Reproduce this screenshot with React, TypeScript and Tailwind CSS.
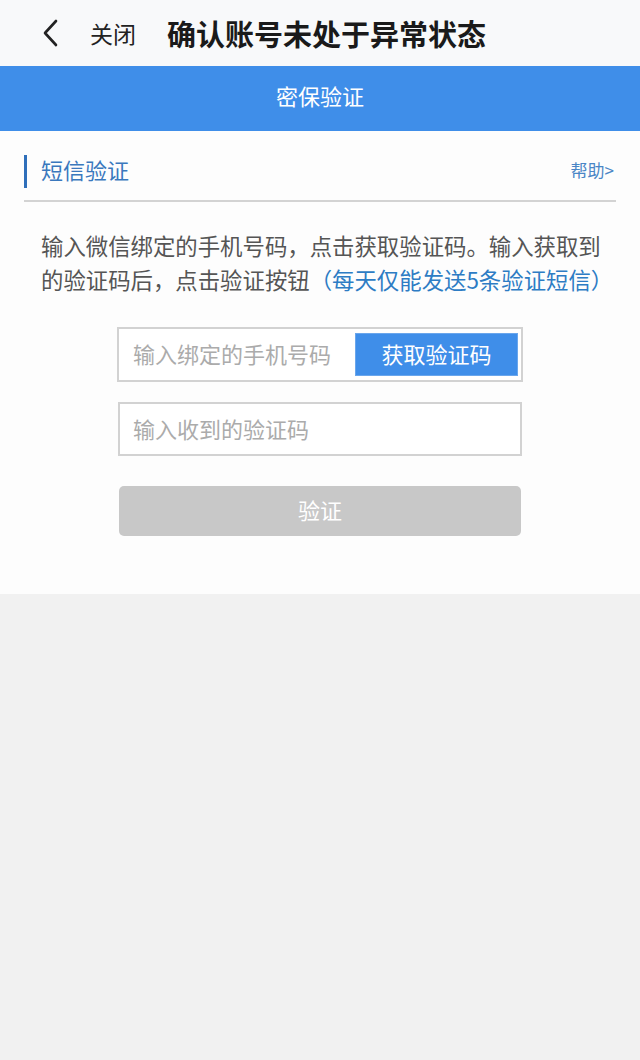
import React from "react";

const App = () => {
  return (
    <div className="w-[640px] min-h-[1060px] bg-[#f1f1f1] font-['Noto_Sans_CJK_SC','Noto_Sans',sans-serif]">
      {/* top bar */}
      <div className="h-[66px] bg-[#f8f9fa] flex items-center">
        <svg className="ml-[42px] w-[16px] h-[28px]" viewBox="0 0 16 28" fill="none">
          <path d="M14 2 L3 14 L14 26" stroke="#222" strokeWidth="2.6" strokeLinecap="round" strokeLinejoin="round" />
        </svg>
        <span className="ml-[32px] text-[23px] text-[#222] leading-none">关闭</span>
        <span className="ml-[31px] text-[29px] font-bold text-[#1a1a1a] leading-none">确认账号未处于异常状态</span>
      </div>

      <div className="h-[65px] bg-[#3f8ee9] flex items-center justify-center pb-[6px] text-white text-[22px]">
        密保验证
      </div>

      <div className="bg-[#fdfdfd] h-[463px] px-[24px] pt-[24px]">
        <div className="h-[33px] flex items-center justify-between border-l-[3px] border-[#2f6fba] pl-[14px] pb-[5px]">
          <span className="text-[22px] text-[#3a78bd] leading-none">短信验证</span>
          <span className="text-[17px] text-[#4a86c6] leading-none mr-[2px]">帮助&gt;</span>
        </div>
        <div className="mt-[12px] h-[2px] bg-[#d3d3d3]" />

        <p className="mt-[26px] px-[17px] text-[22.4px] leading-[34px] text-[#555] whitespace-nowrap">
          输入微信绑定的手机号码，点击获取验证码。输入获取到
          <br />
          的验证码后，点击验证按钮
          <span className="text-[#2d7cc4]">（每天仅能发送5条验证短信）</span>
        </p>

        <div className="mt-[31px] mx-auto w-[406px] h-[55px] border-2 border-[#d2d2d2] bg-white flex items-stretch p-[3px] pt-[4px] pb-[4px]">
          <input
            className="flex-1 min-w-0 pl-[11px] pb-[3px] text-[22px] text-[#333] placeholder:text-[#ababab] outline-none bg-transparent"
            placeholder="输入绑定的手机号码"
          />
          <button className="w-[163px] pb-[2px] bg-[#3f8ee9] text-white text-[22px] border border-[#6aa6ec]">
            获取验证码
          </button>
        </div>

        <div className="mt-[20px] mx-auto w-[404px] h-[54px] border-2 border-[#d2d2d2] bg-white flex items-center">
          <input
            className="w-full h-full pl-[13px] pb-[3px] text-[22px] text-[#333] placeholder:text-[#ababab] outline-none bg-transparent"
            placeholder="输入收到的验证码"
          />
        </div>

        <button className="mt-[30px] mx-auto block w-[402px] h-[50px] pb-[3px] rounded-[5px] bg-[#c8c8c8] text-white text-[22px]">
          验证
        </button>
      </div>
    </div>
  );
};

export default App;
